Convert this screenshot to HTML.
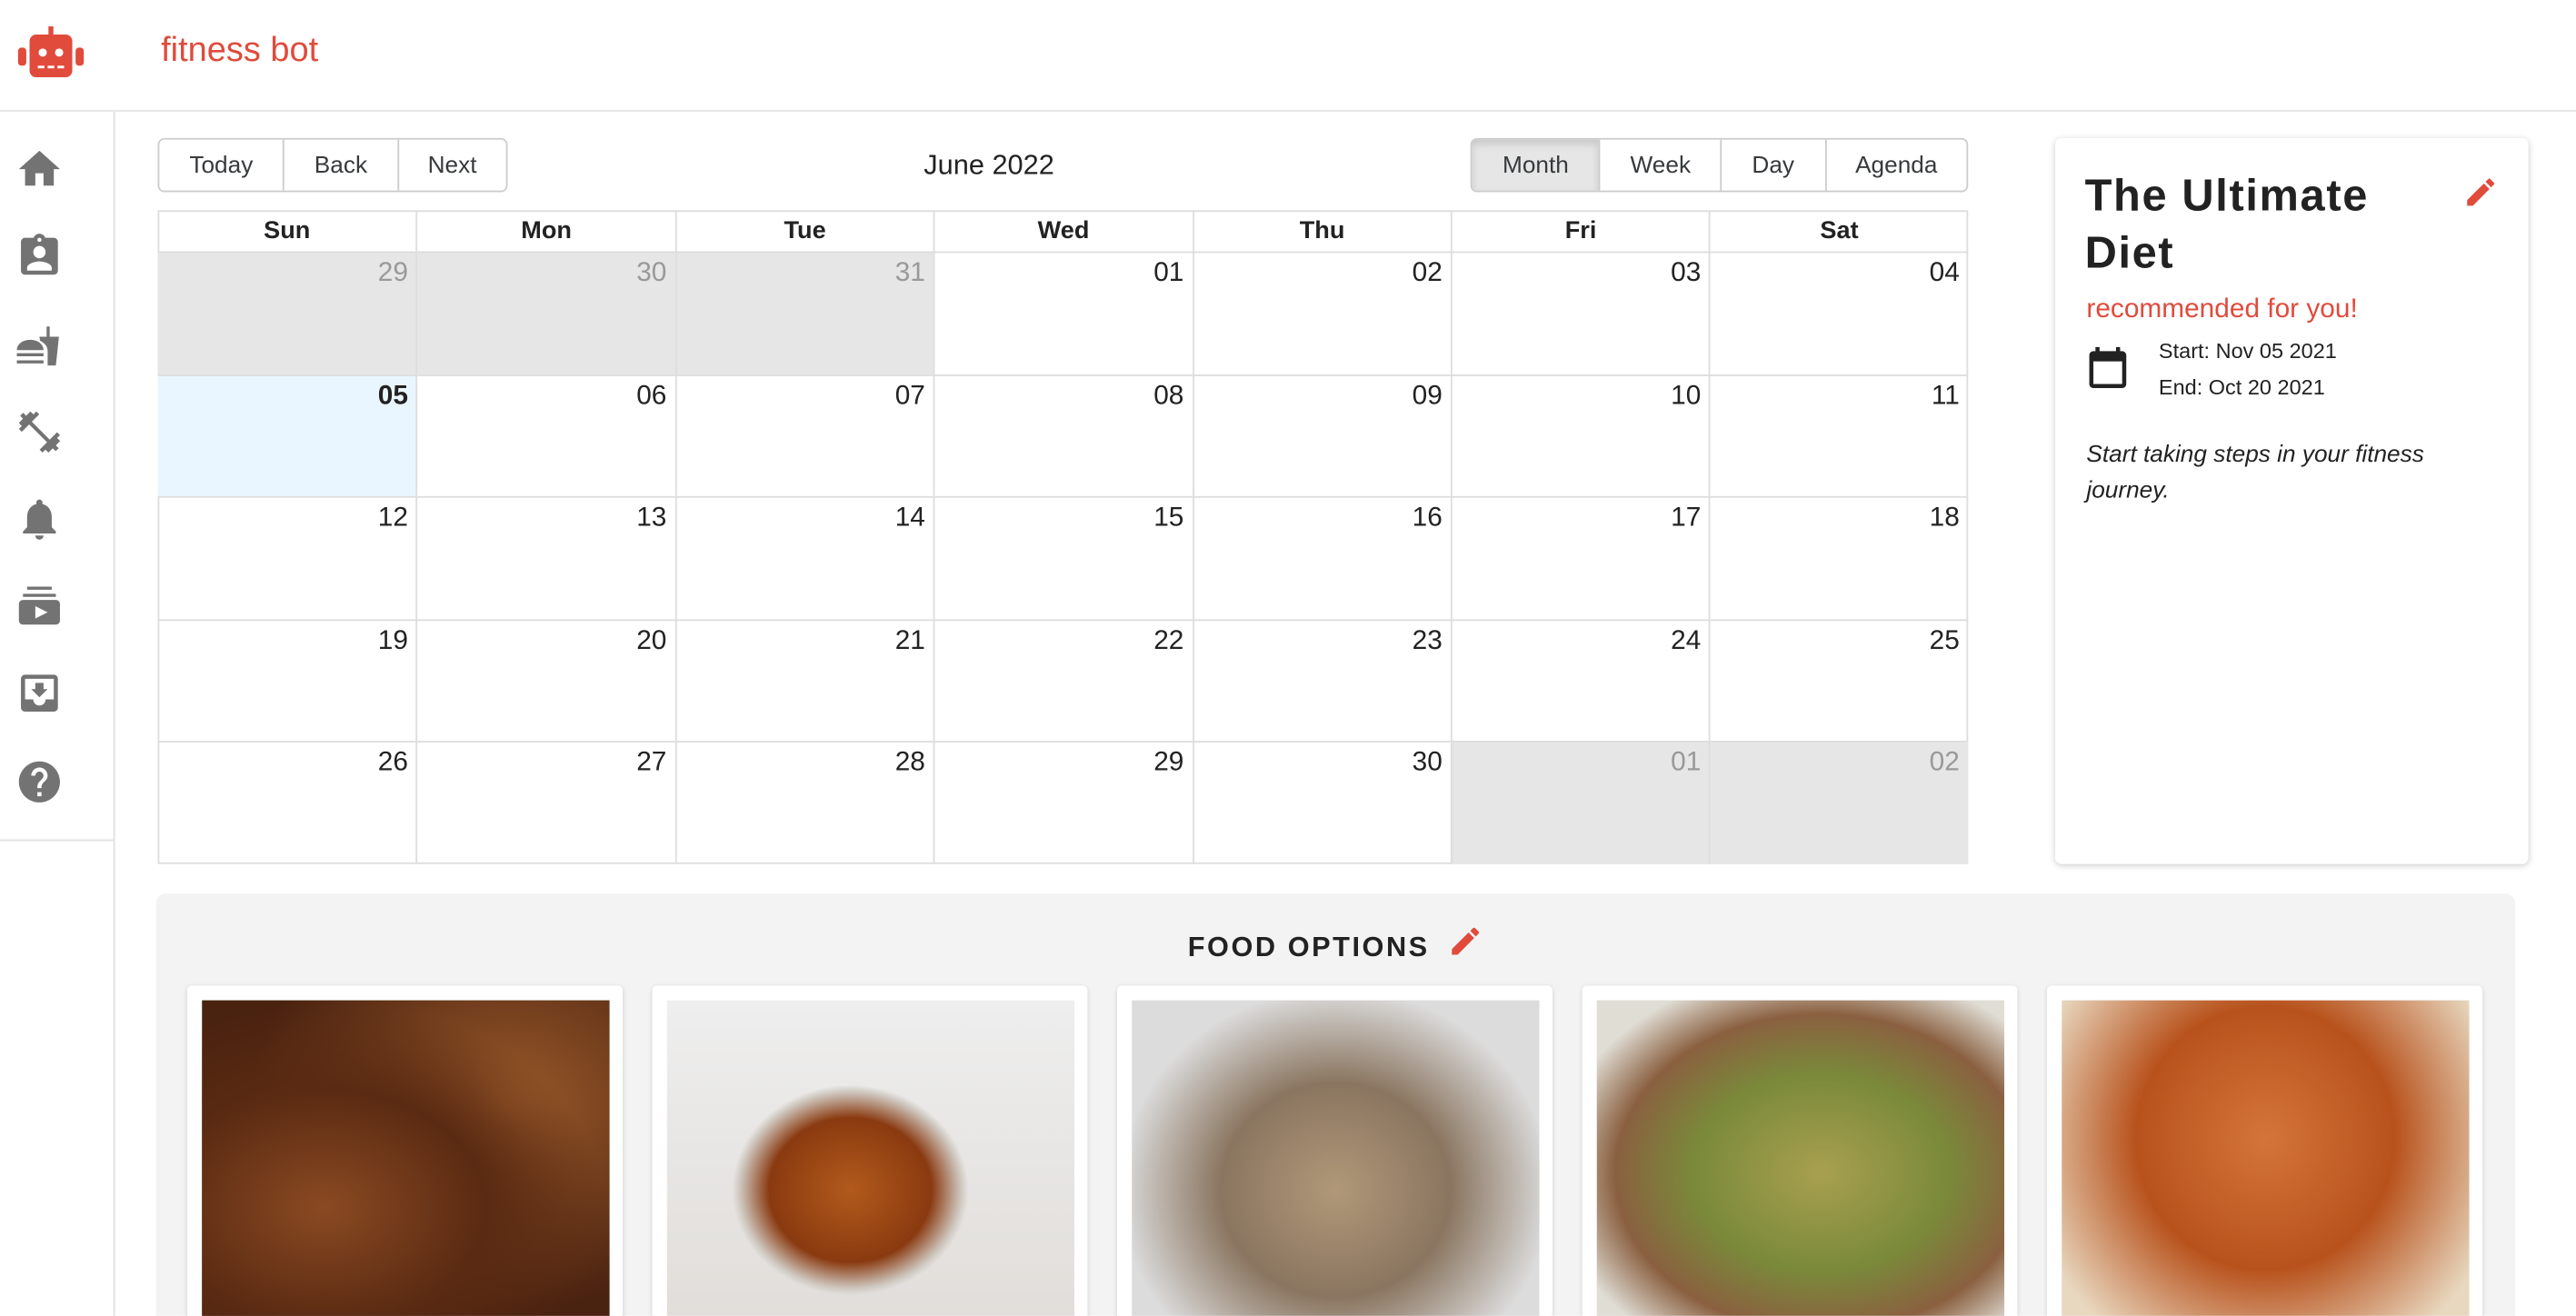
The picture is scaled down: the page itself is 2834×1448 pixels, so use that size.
<!DOCTYPE html>
<html><head><meta charset="utf-8"><style>
html,body{margin:0;padding:0;width:2834px;height:1448px;overflow:hidden;background:#fff;font-family:"Liberation Sans",Arial,sans-serif;color:#222}
#w{position:absolute;left:0;top:0;width:1568px;height:801px;transform:scale(1.80740);transform-origin:0 0;overflow:hidden}
.a{position:absolute}
.btns{position:absolute;top:84px;height:31px;display:flex;border:1px solid #ccc;border-radius:4px;overflow:hidden;font-size:14.5px;color:#373a3c}
.btns div{display:flex;align-items:center;justify-content:center;border-left:1px solid #ccc;box-sizing:border-box}
.btns div:first-child{border-left:none}
#cal{position:absolute;left:96px;top:128px;width:1102px;height:398px;border:1px solid #ddd;box-sizing:border-box}
.c{position:absolute;box-sizing:border-box;border-left:1px solid #ddd;border-top:1px solid #ddd;text-align:right;font-size:16.5px;padding:3px 5px 0 0;width:157.4px;height:74.6px}
.h{position:absolute;top:0;height:25px;width:157.4px;box-sizing:border-box;border-left:1px solid #ddd;text-align:center;font-size:15px;font-weight:bold;line-height:24px}
.o{background:#e6e6e6;color:#999}
.t{background:#eaf6ff;font-weight:bold}
.ic{position:absolute;left:9px;width:30px;height:30px}
.card{position:absolute;top:600px;width:265px;height:220px;background:#fff;border-radius:3px;box-shadow:0 1px 3px rgba(0,0,0,.15)}
.img{position:absolute;left:9px;top:9px;width:248px;height:210px}
</style></head><body><div id="w">
<div class="a" style="left:0;top:67px;width:1568px;height:1px;background:#e6e6e6"></div>
<svg class="a" style="left:10px;top:16px" width="42" height="32" viewBox="0 0 42 32"><rect x="19.5" y="0" width="3" height="6" fill="#e04b3c"/><rect x="8" y="5" width="26" height="26" rx="4" fill="#e04b3c"/><rect x="1" y="13" width="5" height="11" rx="2" fill="#e04b3c"/><rect x="36" y="13" width="5" height="11" rx="2" fill="#e04b3c"/><circle cx="16" cy="16" r="2.5" fill="#fff"/><circle cx="26" cy="16" r="2.5" fill="#fff"/><rect x="13" y="24" width="4" height="1.6" fill="#fff"/><rect x="19" y="24" width="4" height="1.6" fill="#fff"/><rect x="25" y="24" width="4" height="1.6" fill="#fff"/></svg>
<div class="a" style="left:98px;top:19px;font-size:21px;color:#e04b3c">fitness bot</div>
<div class="a" style="left:69px;top:68px;width:1px;height:740px;background:#e0e0e0"></div>
<div class="a" style="left:0;top:511px;width:69px;height:1px;background:#e0e0e0"></div>
<svg class="ic" style="top:88px" viewBox="0 0 24 24"><path d="M10 20v-6h4v6h5v-8h3L12 3 2 12h3v8z" fill="#737373"/></svg>
<svg class="ic" style="top:141px" viewBox="0 0 24 24"><path d="M19 3h-4.2C14.4 1.8 13.3 1 12 1s-2.4.8-2.8 2H5c-1.1 0-2 .9-2 2v14c0 1.1.9 2 2 2h14c1.1 0 2-.9 2-2V5c0-1.1-.9-2-2-2zm-7 0c.6 0 1 .4 1 1s-.4 1-1 1-1-.4-1-1 .4-1 1-1zm0 4c1.7 0 3 1.3 3 3s-1.3 3-3 3-3-1.3-3-3 1.3-3 3-3zm6 12H6v-1.4c0-2 4-3.1 6-3.1s6 1.1 6 3.1V19z" fill="#737373"/></svg>
<svg class="ic" style="top:195px" viewBox="0 0 24 24"><path d="M1 21h13v-1.5H1zM1 17.5h13V16H1zM1 14.5h13c0-3-3-5-6.5-5S1 11.5 1 14.5zM16 22h4l1.5-14H17V3h-1.5v5H12l.3 2C14.6 11 16 12.8 16 15z" fill="#737373"/></svg>
<svg class="ic" style="top:248px" viewBox="0 0 24 24"><path d="M20.6 14.9L22 13.5 20.6 12.1 17 15.7 8.3 7 11.9 3.4 10.5 2 9.1 3.4 7.6 2 5.5 4.1 4.1 2.6 2.6 4.1l1.4 1.4L2 7.6 3.4 9.1 2 10.5 3.4 11.9 7 8.3 15.7 17 12.1 20.6 13.5 22l1.4-1.4 1.5 1.4 2.1-2.1 1.4 1.4 1.5-1.4-1.4-1.4 2.1-2.1z" fill="#737373"/></svg>
<svg class="ic" style="top:301px" viewBox="0 0 24 24"><path d="M12 22c1.1 0 2-.9 2-2h-4c0 1.1.9 2 2 2zm6-6v-5c0-3.1-1.6-5.6-4.5-6.3V4c0-.8-.7-1.5-1.5-1.5s-1.5.7-1.5 1.5v.7C7.6 5.4 6 7.9 6 11v5l-2 2v1h16v-1z" fill="#737373"/></svg>
<svg class="ic" style="top:354px" viewBox="0 0 24 24"><path d="M4 6h16v1.5H4zM6 2.5h12V4H6zM20 9H4c-1.1 0-2 .9-2 2v8c0 1.1.9 2 2 2h16c1.1 0 2-.9 2-2v-8c0-1.1-.9-2-2-2zm-10 9v-6l6 3z" fill="#737373"/></svg>
<svg class="ic" style="top:407px" viewBox="0 0 24 24"><path d="M19 3H5c-1.1 0-2 .9-2 2v14c0 1.1.9 2 2 2h14c1.1 0 2-.9 2-2V5c0-1.1-.9-2-2-2zm0 12h-4c0 1.7-1.3 3-3 3s-3-1.3-3-3H5V5h14zm-3-5h-2V7h-4v3H8l4 4z" fill="#737373"/></svg>
<svg class="ic" style="top:461px" viewBox="0 0 24 24"><path d="M12 2C6.5 2 2 6.5 2 12s4.5 10 10 10 10-4.5 10-10S17.5 2 12 2zm1 17h-2v-2h2zm2.1-7.8l-.9.9c-.7.7-1.2 1.3-1.2 2.9h-2v-.5c0-1.1.4-2.1 1.2-2.8l1.2-1.3c.4-.4.6-.9.6-1.4 0-1.1-.9-2-2-2s-2 .9-2 2H8c0-2.2 1.8-4 4-4s4 1.8 4 4c0 .9-.4 1.7-.9 2.2z" fill="#737373"/></svg>
<div class="btns" style="left:96px;width:211px"><div style="width:76px">Today</div><div style="width:70px">Back</div><div style="width:67px">Next</div></div>
<div class="a" style="left:502px;width:200px;top:91px;text-align:center;font-size:17px">June 2022</div>
<div class="btns" style="left:895px;width:301px"><div style="width:78px;background:#e6e6e6;box-shadow:inset 0 3px 5px rgba(0,0,0,.125)">Month</div><div style="width:74px">Week</div><div style="width:64px">Day</div><div style="width:87px">Agenda</div></div>
<div id="cal">
<div class="h" style="left:-1px;border-left:none">Sun</div><div class="h" style="left:156.4px">Mon</div><div class="h" style="left:313.8px">Tue</div><div class="h" style="left:471.2px">Wed</div><div class="h" style="left:628.6px">Thu</div><div class="h" style="left:786px">Fri</div><div class="h" style="left:943.4px">Sat</div>
<div id="cells"></div>
</div>
<script>
(function(){var d=[[29,30,31,1,2,3,4],[5,6,7,8,9,10,11],[12,13,14,15,16,17,18],[19,20,21,22,23,24,25],[26,27,28,29,30,1,2]];var h='';for(var r=0;r<5;r++)for(var c=0;c<7;c++){var n=d[r][c];var cl='c';if((r==0&&c<3)||(r==4&&c>4))cl+=' o';if(r==1&&c==0)cl+=' t';h+='<div class="'+cl+'" style="left:'+(-1+c*157.4)+'px;top:'+(24+r*74.6)+'px;'+(c==0?'border-left:none;':'')+'">'+(n<10?'0'+n:n)+'</div>';}document.getElementById('cells').innerHTML=h;})();
</script>
<div class="a" style="left:1251px;top:84px;width:288px;height:442px;background:#fff;border-radius:4px;box-shadow:0 1px 4px rgba(0,0,0,.2)"></div>
<div class="a" style="left:1269px;top:102px;font-size:27px;font-weight:bold;letter-spacing:0.9px;line-height:35px;color:#222">The Ultimate<br>Diet</div>
<svg class="a" style="left:1499px;top:106px" width="22" height="22" viewBox="0 0 24 24"><path d="M3 17.2V21h3.8L17.8 9.9l-3.7-3.7zM20.7 7c.4-.4.4-1 0-1.4l-2.3-2.3c-.4-.4-1-.4-1.4 0l-1.8 1.8 3.7 3.7z" fill="#e04b3c"/></svg>
<div class="a" style="left:1270px;top:179px;font-size:16.5px;color:#e04b3c">recommended for you!</div>
<svg class="a" style="left:1268px;top:210px" width="30" height="30" viewBox="0 0 24 24"><path d="M19 3h-1V1h-2v2H8V1H6v2H5c-1.1 0-2 .9-2 2v14c0 1.1.9 2 2 2h14c1.1 0 2-.9 2-2V5c0-1.1-.9-2-2-2zm0 16H5V8h14z" fill="#222"/></svg>
<div class="a" style="left:1314px;top:203px;font-size:13px;line-height:22px">Start: Nov 05 2021<br>End: Oct 20 2021</div>
<div class="a" style="left:1270px;top:266px;font-size:14.5px;font-style:italic;line-height:22px">Start taking steps in your fitness<br>journey.</div>
<div class="a" style="left:95px;top:544px;width:1436px;height:300px;background:#f3f3f3;border-radius:6px"></div>
<div class="a" style="left:723px;top:567px;font-size:17px;font-weight:bold;letter-spacing:1.4px;color:#222">FOOD OPTIONS</div>
<svg class="a" style="left:881px;top:562px" width="22" height="22" viewBox="0 0 24 24"><path d="M3 17.2V21h3.8L17.8 9.9l-3.7-3.7zM20.7 7c.4-.4.4-1 0-1.4l-2.3-2.3c-.4-.4-1-.4-1.4 0l-1.8 1.8 3.7 3.7z" fill="#e04b3c"/></svg>
<div class="card" style="left:114px"><div class="img" style="background:radial-gradient(ellipse at 30% 60%,#8a4a22 0%,#5a2a12 40%,transparent 70%),radial-gradient(ellipse at 75% 30%,#9b5a2a,#4a2210 60%),linear-gradient(#6a8a3a 0%,#4a3a20 20%,#3a1e10 100%)"></div></div>
<div class="card" style="left:397px"><div class="img" style="background:radial-gradient(ellipse 90px 80px at 45% 55%,#b25a1c 0%,#8a3a10 55%,#cfc8c0 75%,transparent 80%),linear-gradient(#eeeeee,#e0dcd8)"></div></div>
<div class="card" style="left:680px"><div class="img" style="background:radial-gradient(ellipse at 50% 55%,#b09878 0%,#8a7560 40%,#dcdcdc 75%),#e8e8e8"></div></div>
<div class="card" style="left:963px"><div class="img" style="background:radial-gradient(ellipse at 55% 50%,#a8a050 0%,#7a8a3a 40%,#8a6040 65%,#e0ddd5 85%),#ddd"></div></div>
<div class="card" style="left:1246px"><div class="img" style="background:radial-gradient(ellipse at 50% 40%,#d4743a 0%,#b8521c 45%,#e8d8c0 85%),#eee"></div></div>
</div></body></html>
